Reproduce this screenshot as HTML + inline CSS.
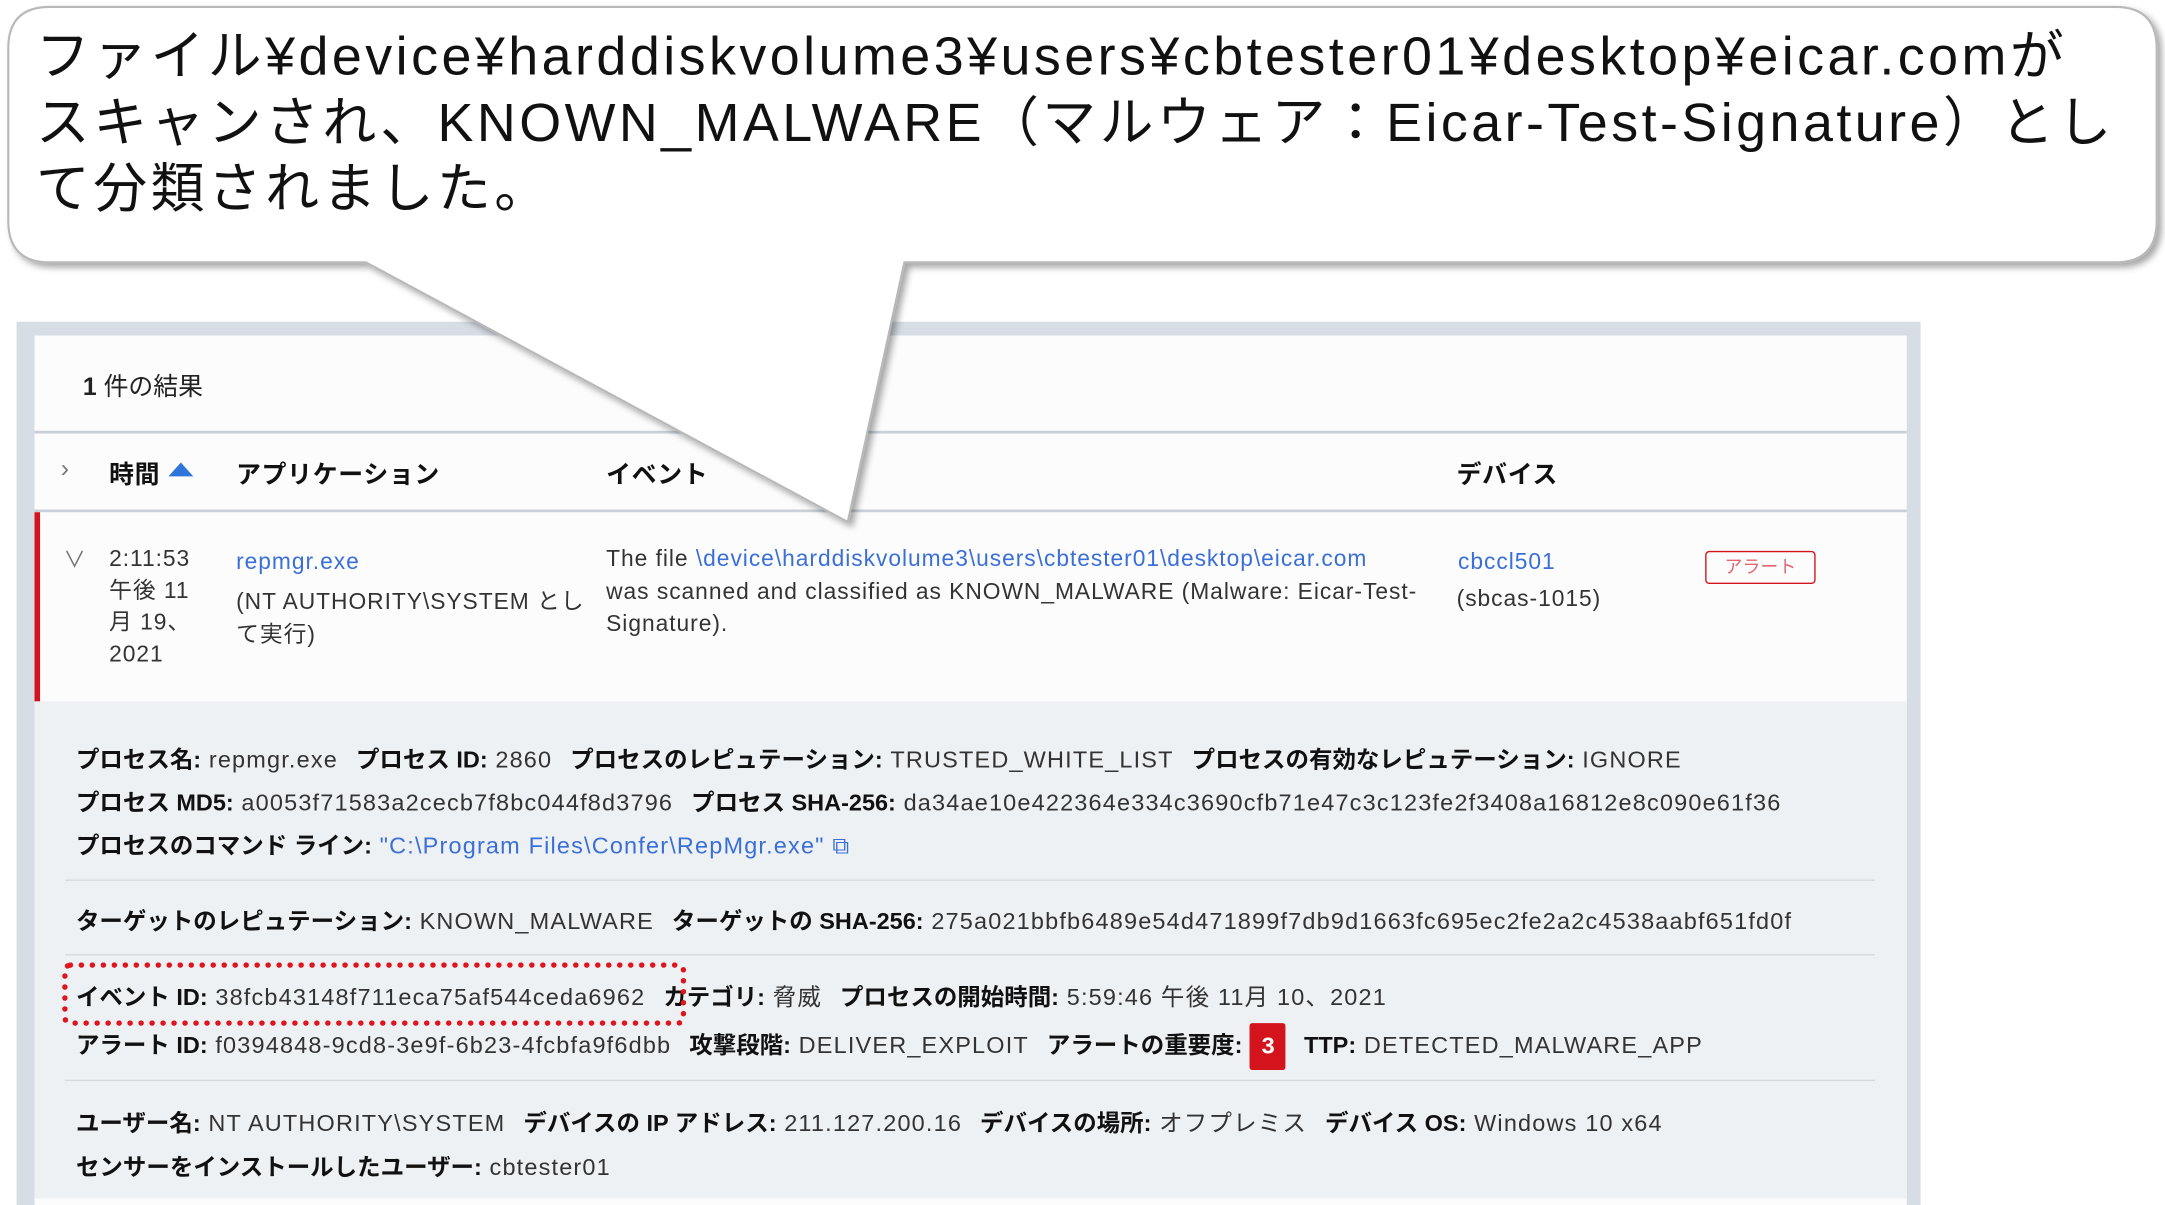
<!DOCTYPE html>
<html><head><meta charset="utf-8"><style>
html,body{margin:0;padding:0;width:2165px;height:1187px;overflow:hidden;background:#fff}
#w{position:absolute;left:0;top:0;width:1568px;height:860px;transform:scale(1.3807);transform-origin:0 0;font-family:"Liberation Sans","Noto Sans CJK JP",sans-serif;color:#222}
.a{position:absolute;white-space:nowrap}
.frame{position:absolute;left:12px;top:233px;width:1379px;height:640px;background:#d6dde4}
.inner{position:absolute;left:25px;top:243px;width:1356px;height:630px;background:#fcfcfc}
.hl{position:absolute;left:25px;width:1356px;height:2px;background:#c9d0d7}
.det{position:absolute;left:25px;top:508px;width:1356px;height:360px;background:#eef1f4}
.sep{position:absolute;left:47px;width:1311px;height:1px;background:#d5dadf}
.d{position:absolute;left:55px;white-space:nowrap;font-size:17px;letter-spacing:0.85px;color:#333}
.d b{color:#111;letter-spacing:0}
.d i{font-style:normal;display:inline-block;width:13px}
.s{font-size:16.5px;letter-spacing:0.7px;color:#333}
.blue{color:#3a6fd8}
.h{font-size:18px;font-weight:bold;color:#111;letter-spacing:0.5px}
.bubble{position:absolute;left:26px;top:18px;font-size:39px;line-height:48px;color:#111;letter-spacing:2.5px}
</style></head><body><div id="w">
<div class="frame"></div><div class="inner"></div>
<div class="a" style="left:60px;top:266px;font-size:18px;color:#222"><b>1</b> 件の結果</div>
<div class="hl" style="top:312px"></div>
<div class="a" style="left:44px;top:329px;font-size:18px;color:#777">›</div>
<div class="a h" style="left:79px;top:330px">時間</div>
<div class="a" style="left:122px;top:335px;width:0;height:0;border-left:9px solid transparent;border-right:9px solid transparent;border-bottom:10px solid #2f74d8"></div>
<div class="a h" style="left:171px;top:330px">アプリケーション</div>
<div class="a h" style="left:439px;top:330px">イベント</div>
<div class="a h" style="left:1055px;top:330px">デバイス</div>
<div class="hl" style="top:369px"></div>
<div class="a" style="left:25px;top:371px;width:4px;height:137px;background:#d4141c"></div>
<div class="a" style="left:46px;top:392px;font-size:16px;color:#777">∨</div>
<div class="a s" style="left:79px;top:394px;line-height:23px">2:11:53<br>午後 11<br>月 19、<br>2021</div>
<div class="a s blue" style="left:171px;top:398px">repmgr.exe</div>
<div class="a s" style="left:171px;top:424px;line-height:24px">(NT AUTHORITY\SYSTEM とし<br>て実行)</div>
<div class="a s" style="left:439px;top:394px;line-height:23.5px">The file <span class="blue">\device\harddiskvolume3\users\cbtester01\desktop\eicar.com</span><br>was scanned and classified as KNOWN_MALWARE (Malware: Eicar-Test-<br>Signature).</div>
<div class="a s blue" style="left:1056px;top:398px">cbccl501</div>
<div class="a s" style="left:1055px;top:425px">(sbcas-1015)</div>
<div class="a" style="left:1235px;top:399px;width:78px;height:22px;border:1.5px solid #d4141c;border-radius:3px;color:#e06670;font-size:13px;text-align:center;line-height:22px">アラート</div>
<div class="det"></div>
<div class="d" style="top:536px"><b>プロセス名:</b> repmgr.exe<i></i><b>プロセス ID:</b> 2860<i></i><b>プロセスのレピュテーション:</b> TRUSTED_WHITE_LIST<i></i><b>プロセスの有効なレピュテーション:</b> IGNORE</div>
<div class="d" style="top:567px"><b>プロセス MD5:</b> a0053f71583a2cecb7f8bc044f8d3796<i></i><b>プロセス SHA-256:</b> da34ae10e422364e334c3690cfb71e47c3c123fe2f3408a16812e8c090e61f36</div>
<div class="d" style="top:598px"><b>プロセスのコマンド ライン:</b> <span class="blue">"C:\Program Files\Confer\RepMgr.exe"</span> <span class="blue">⧉</span></div>
<div class="sep" style="top:637px"></div>
<div class="d" style="top:653px"><b>ターゲットのレピュテーション:</b> KNOWN_MALWARE<i></i><b>ターゲットの SHA-256:</b> 275a021bbfb6489e54d471899f7db9d1663fc695ec2fe2a2c4538aabf651fd0f</div>
<div class="sep" style="top:691px"></div>
<div class="d" style="top:708px"><b>イベント ID:</b> 38fcb43148f711eca75af544ceda6962<i></i><b>カテゴリ:</b> 脅威<i></i><b>プロセスの開始時間:</b> 5:59:46 午後 11月 10、2021</div>
<div class="d" style="top:741px"><b>アラート ID:</b> f0394848-9cd8-3e9f-6b23-4fcbfa9f6dbb<i></i><b>攻撃段階:</b> DELIVER_EXPLOIT<i></i><b>アラートの重要度:</b> <span style="display:inline-block;width:26px;height:34px;background:#d4141c;color:#fff;text-align:center;line-height:34px;vertical-align:middle;border-radius:2px;font-weight:bold;letter-spacing:0">3</span><i></i><b>TTP:</b> DETECTED_MALWARE_APP</div>
<div class="sep" style="top:782px"></div>
<div class="d" style="top:799px"><b>ユーザー名:</b> NT AUTHORITY\SYSTEM<i></i><b>デバイスの IP アドレス:</b> 211.127.200.16<i></i><b>デバイスの場所:</b> オフプレミス<i></i><b>デバイス OS:</b> Windows 10 x64</div>
<div class="d" style="top:831px"><b>センサーをインストールしたユーザー:</b> cbtester01</div>
<div class="a" style="left:45px;top:697px;width:444px;height:38px;border:4px dotted #e0141c;border-radius:6px"></div>
<svg class="a" style="left:0;top:0" width="1568" height="400" viewBox="0 0 1568 400">
<defs><filter id="sh" x="-5%" y="-5%" width="110%" height="120%"><feDropShadow dx="3" dy="3" stdDeviation="2.5" flood-color="#000" flood-opacity="0.35"/></filter></defs>
<path d="M36,5 H1532 Q1562,5 1562,35 V160 Q1562,190 1532,190 H655 L614,378 L265,190 H36 Q6,190 6,160 V35 Q6,5 36,5 Z" fill="#fff" stroke="#b8b8b8" stroke-width="1.5" filter="url(#sh)"/>
</svg>
<div class="bubble">ファイル¥device¥harddiskvolume3¥users¥cbtester01¥desktop¥eicar.comが<br>スキャンされ、KNOWN_MALWARE（マルウェア：Eicar-Test-Signature）とし<br>て分類されました。</div>
</div></body></html>
